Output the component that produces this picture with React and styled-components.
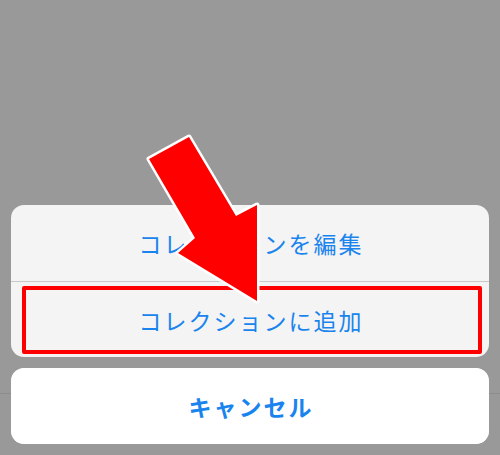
import styled, { createGlobalStyle } from 'styled-components'

const GlobalStyle = createGlobalStyle`
  html, body {
    margin: 0;
    padding: 0;
  }
  body {
    font-family: "Noto Sans CJK JP", "Noto Sans", sans-serif;
    background: #999999;
  }
`;

const Screen = styled.div`
  position: relative;
  width: 500px;
  height: 455px;
  overflow: hidden;
  display: flex;
  flex-direction: column;
  justify-content: flex-end;
  background-color: #999999;
  /* border of the toolbar underneath the dimmed layer */
  background-image: linear-gradient(#8c8c8c, #8c8c8c);
  background-size: 100% 1px;
  background-position: 0 393px;
  background-repeat: no-repeat;
`;

const Sheet = styled.div`
  display: flex;
  flex-direction: column;
  gap: 11px;
  padding: 0 11px 11px;
`;

const Group = styled.div`
  display: flex;
  flex-direction: column;
  background: #f4f4f4;
  border-radius: 13px;
  overflow: hidden;
`;

const Action = styled.div`
  position: relative;
  height: 76px;
  display: flex;
  align-items: center;
  justify-content: center;
  color: #1a84ee;
  font-size: 23px;
  font-weight: ${p => (p.$bold ? 700 : 400)};
  letter-spacing: 2px;
  padding-left: 2px;
  background: ${p => (p.$cancel ? '#ffffff' : 'transparent')};
  border-radius: ${p => (p.$cancel ? '13px' : '0')};
  & + & {
    border-top: 1px solid #c9c9c9;
    height: 75px;
  }
`;

const Highlight = styled.div`
  position: absolute;
  top: 4px;
  left: 11px;
  right: 7px;
  bottom: 3px;
  border: 4.5px solid #ff0000;
  border-radius: 2px;
  pointer-events: none;
`;

const ArrowLayer = styled.svg`
  position: absolute;
  top: 0;
  left: 0;
  width: 500px;
  height: 455px;
  pointer-events: none;
`;

const Arrow = () => (
  <ArrowLayer viewBox="0 0 500 455">
    <polygon
      points="149,159 189,137 236,216 257,205 257,301 178,253 195,238"
      fill="#ff0000"
      stroke="#ffffff"
      strokeWidth="5"
      strokeLinejoin="round"
      paintOrder="stroke"
    />
  </ArrowLayer>
);

const App = () => {
  return (
    <>
      <GlobalStyle />
      <Screen>
        <Sheet>
          <Group>
            <Action>コレクションを編集</Action>
            <Action>
              コレクションに追加
              <Highlight />
            </Action>
          </Group>
          <Group>
            <Action $cancel $bold>キャンセル</Action>
          </Group>
        </Sheet>
        <Arrow />
      </Screen>
    </>
  )
}

export default App
